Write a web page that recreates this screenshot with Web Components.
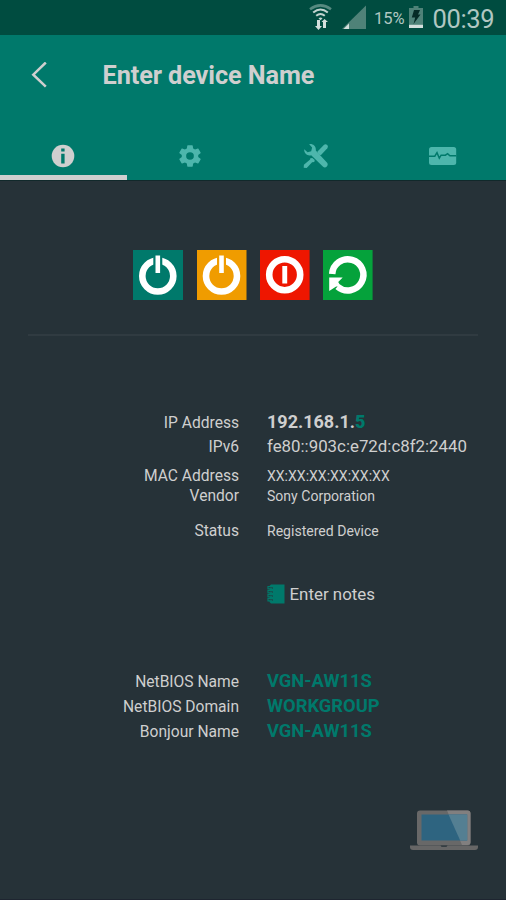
<!DOCTYPE html>
<html lang="en">
<head>
<meta charset="utf-8">
<title>Device details</title>
<style>
html,body{margin:0;background:#263238}
body{font-family:Roboto,"Liberation Sans",sans-serif}
</style>
</head>
<body>
<device-screen></device-screen>
<script>
const define = (name, html) => customElements.define(name, class extends HTMLElement {
  constructor() {
    super();
    this.attachShadow({mode: 'open'}).innerHTML = typeof html === 'function' ? html(this) : html;
  }
});

define('status-bar', `
<style>
:host{display:flex;height:35px;background:#004c40;color:#b0c7c2;box-sizing:border-box;padding-left:309px;align-items:flex-start}
svg{display:block;flex:none}
.pct{font-size:16.5px;line-height:20px;margin:9px 0 0 0;width:35px;white-space:nowrap}
.time{font-size:25.5px;line-height:30px;margin:4px 0 0 8.500px;white-space:nowrap;letter-spacing:-.35px}
</style>
<svg width="65" height="35" viewBox="0 0 65 35">
  <g fill="none" stroke="#c2d4d0" stroke-width="2">
    <path d="M1 9.2Q11.500 1.500 22 9.200" stroke="#568a80" stroke-width="2.600"/>
    <path d="M4.200 12.600Q11.500 6.500 18.800 12.600"/>
    <path d="M7.200 15.800Q11.500 12.200 15.800 15.800"/>
  </g>
  <path d="M9.500 18.500Q11.500 16.600 13.500 18.500L11.500 20.300z" fill="#c2d4d0"/>
  <path d="M8 20h3v6h2l-3.500 4L6 26h2zM14 28h3v-6h2l-3.500-3-3 3H14z" fill="#d3dfdc"/>
  <path d="M61 5.500V29H37z" fill="#4f8278" transform="translate(-4 0)"/>
  <path d="M40 23.500V29h-5.500z" fill="#d3dfdc"/>
</svg>
<span class="pct">15%</span>
<svg width="15" height="35" viewBox="0 0 15 35">
  <path d="M4.500 6h5v2H14v20H0V8h4.500z" fill="#4f8278"/>
  <path d="M0 24.800h14V28H0z" fill="#d3dfdc"/>
  <path d="M5 10h6l-2 4.500h2.500L4.500 24l1.700-6.500H2.800z" fill="#062b26"/>
</svg>
<span class="time">00:39</span>`);

define('title-bar', `
<style>
:host{display:flex;align-items:center;height:81px;padding-left:30px;color:#cfcfcf}
svg{flex:none}
h1{margin:0 0 0 54.500px;font-size:25.300px;font-weight:700;line-height:32px;white-space:nowrap;letter-spacing:-.1px}
</style>
<svg width="18" height="28" viewBox="0 0 18 28"><path d="M15.800 .5L3.300 12.700l12.500 12" fill="none" stroke="#cfcfcf" stroke-width="2.500"/></svg>
<h1><slot></slot></h1>`);

define('tab-item', `
<style>
:host{display:flex;flex:1;justify-content:center;align-items:center;box-sizing:border-box;height:63px;padding-top:19px;border-bottom:5px solid transparent;color:#4db6ac}
:host([active]){color:#cfcfcf;border-bottom-color:#cfcfcf}
::slotted(svg){display:block}
</style><slot></slot>`);

define('tab-strip', `
<style>
:host{display:flex;height:64px;align-items:flex-end;border-bottom:1px solid #11292b}
</style>
<tab-item active><svg width="26" height="26" viewBox="0 0 26 26"><circle cx="13" cy="13" r="11.300" fill="currentColor"/><path d="M11.200 5.500h3.400v3h-3.400zM11.200 10.800h3.400v9.700h-3.400z" fill="#00796b"/></svg></tab-item>
<tab-item><svg width="26" height="26" viewBox="-1 -1 26 26"><path fill="currentColor" transform="translate(-1.200 -.9) scale(1.100 1.075)" d="M19.430 12.980c.04-.32.070-.64.070-.98s-.03-.66-.07-.98l2.110-1.650c.19-.15.24-.42.120-.64l-2-3.460c-.12-.22-.39-.3-.61-.22l-2.490 1c-.52-.4-1.080-.73-1.690-.98l-.38-2.650C14.460 2.180 14.250 2 14 2h-4c-.25 0-.46.180-.49.420l-.38 2.650c-.61.250-1.170.59-1.690.98l-2.490-1c-.23-.09-.49 0-.61.220l-2 3.460c-.13.220-.07.490.120.640l2.110 1.650c-.04.320-.07.650-.07.980s.03.660.070.980l-2.110 1.650c-.19.150-.24.420-.12.640l2 3.460c.12.220.39.300.61.220l2.490-1c.52.400 1.080.730 1.690.980l.38 2.650c.03.240.24.420.49.420h4c.25 0 .46-.18.490-.42l.38-2.650c.61-.25 1.170-.59 1.690-.98l2.490 1c.23.090.49 0 .61-.22l2-3.460c.12-.22.070-.49-.12-.64zM12 15.500a3.500 3.500 0 1 1 0-7 3.500 3.500 0 0 1 0 7z"/></svg></tab-item>
<tab-item><svg width="26" height="26" viewBox="0 0 26 26"><g fill="currentColor"><path d="M6.200 1.200C9.500.4 13.300 3 12.800 7.400l11.300 12.400c2 2.600-1.400 6-4 4L8.200 12.200C4.300 13.300.8 10.200 1.200 6.200l3.400 3 3.600-1 .9-3.600z"/><path d="M14.500 8.500l6.300-6.600c2.200-2 5.500.8 3.500 3.300l-6.300 6.700c-1.800.6-3.900-1.600-3.500-3.400z"/><path d="M9.300 15l2.400 2-.4 2-2.200.2-5.400 5.700-3-.1.200-3 6.200-5.300.2-1.300z"/></g></svg></tab-item>
<tab-item><svg width="30" height="26" viewBox="0 0 30 26"><rect x="1" y="4" width="27.200" height="18" rx="2.500" fill="currentColor"/><path d="M1 13.200h5.800l2.200-3.500 2.300 5.500 1.800-3h4.300l2.200-1.500 2.300 2h6.300" fill="none" stroke="#00796b" stroke-width="1.500"/></svg></tab-item>`);

define('power-buttons', `
<style>
:host{display:flex;gap:13.300px;padding:69px 0 34px 105.300px;border-bottom:2px solid #303b41;width:344.700px;margin:0 28px}
svg{display:block;flex:none}
circle{fill:none;stroke:#fff;stroke-width:6.600}
</style>
<svg width="50" height="50" viewBox="0 0 50 50"><path fill="#00796b" d="M0 0h50v50H0z"/><circle cx="24.800" cy="26" r="15.500"/><path d="M20.300 4h9v19h-9z" fill="#00796b"/><path d="M22.500 5.500h4.600V23h-4.600z" fill="#fff"/></svg>
<svg width="50" height="50" viewBox="0 0 50 50"><path fill="#f09c00" d="M0 0h49.500v50H0z"/><circle cx="24.500" cy="26" r="15.500"/><path d="M20 4h9v19h-9z" fill="#f09c00"/><path d="M22.200 5.500h4.600V23h-4.600z" fill="#fff"/></svg>
<svg width="50" height="50" viewBox="0 0 50 50"><path fill="#ee1600" d="M0 0h49.600v50H0z"/><circle cx="24.700" cy="24.700" r="15.500"/><path d="M22.300 16h4.900v17.500h-4.900z" fill="#fff"/></svg>
<svg width="50" height="50" viewBox="0 0 50 50"><path fill="#05a23b" d="M0 0h49.600v50H0z"/><path d="M9.200 24A15.600 15.600 0 1 1 14.500 36.600" fill="none" stroke="#fff" stroke-width="6.500"/><path d="M6.200 27.500h13.500l-4.500 4.500 3 5-5-.5-7 4.500z" fill="#fff"/></svg>`);

define('info-row', el => `
<style>
:host{display:flex;align-items:baseline;height:20px;line-height:20px;color:#cfcfcf;font-size:15.600px;white-space:nowrap}
.label{width:239px;margin-right:28px;text-align:right}
.value{font-size:var(--size,14.050px)}
:host([strong]) .value{font-weight:700}
:host([accent]) .value{color:#00796b}
::slotted(b){color:#00796b}
</style><span class="label">${el.getAttribute('label')}</span><span class="value"><slot></slot></span>`);

define('notes-field', `
<style>
:host{display:flex;align-items:center;height:24px;margin:41px 0 65px 267px;font-size:16.900px;color:#cfcfcf;gap:4.500px}
</style>
<svg width="18" height="20" viewBox="0 0 18 20"><path d="M4 .5h13.500v19H4L2.500 18V2z" fill="#00796b"/><g fill="none" stroke="#263238"><path d="M2 4h4M2 8h4M2 12h4M2 16h4"/></g><g fill="none" stroke="#00796b" stroke-width="1.200"><path d="M4 2.500H1v2.300h4M4 6.500H1v2.300h4M4 10.500H1v2.300h4M4 14.500H1v2.300h4"/></g></svg>
<span><slot></slot></span>`);

define('device-kind', `
<style>:host{display:flex;justify-content:flex-end;padding-right:27px;margin-top:69px}svg{display:block}</style>
<svg width="70" height="42" viewBox="0 0 70 42"><rect x="8" y=".5" width="53.500" height="35" rx="3" fill="#686868"/><path d="M38 .5h20.500a3 3 0 0 1 3 3V32a3 3 0 0 1-3 3H53z" fill="#817f7f"/><path d="M12.500 4.500h45.700V30.500H12.500z" fill="#2e6480"/><path d="M39.500 4.500h18.700v26h-7z" fill="#547f92"/><path d="M1 35.500h68v1.500q0 3-3 3H4q-3 0-3-3z" fill="#666"/><path d="M31.500 35.500h7l-1 1.200h-5z" fill="#263238"/></svg>`);

define('device-screen', `
<style>
:host{display:flex;flex-direction:column;width:506px;height:900px;overflow:hidden;background:#263238}
header{background:#00796b;height:146px;box-sizing:border-box}
.info{padding-top:76px;display:flex;flex-direction:column}
footer{margin-top:auto;height:1px;background:#1e2530}
</style>
<status-bar></status-bar>
<header><title-bar>Enter device Name</title-bar><tab-strip></tab-strip></header>
<power-buttons></power-buttons>
<main class="info">
<info-row label="IP Address" strong style="--size:18px;">192.168.1.<b>5</b></info-row>
<info-row label="IPv6" style="--size:16.850px;margin-top:4px">fe80::903c:e72d:c8f2:2440</info-row>
<info-row label="MAC Address" style="margin-top:10px">XX:XX:XX:XX:XX:XX</info-row>
<info-row label="Vendor" style="margin-top:0">Sony Corporation</info-row>
<info-row label="Status" style="margin-top:15px">Registered Device</info-row>
<notes-field>Enter notes</notes-field>
<info-row label="NetBIOS Name" strong accent style="--size:18.350px">VGN-AW11S</info-row>
<info-row label="NetBIOS Domain" strong accent style="--size:18.350px;margin-top:5px">WORKGROUP</info-row>
<info-row label="Bonjour Name" strong accent style="--size:18.350px;margin-top:5px">VGN-AW11S</info-row>
</main>
<device-kind></device-kind>
<footer></footer>`);
</script>
</body>
</html>
